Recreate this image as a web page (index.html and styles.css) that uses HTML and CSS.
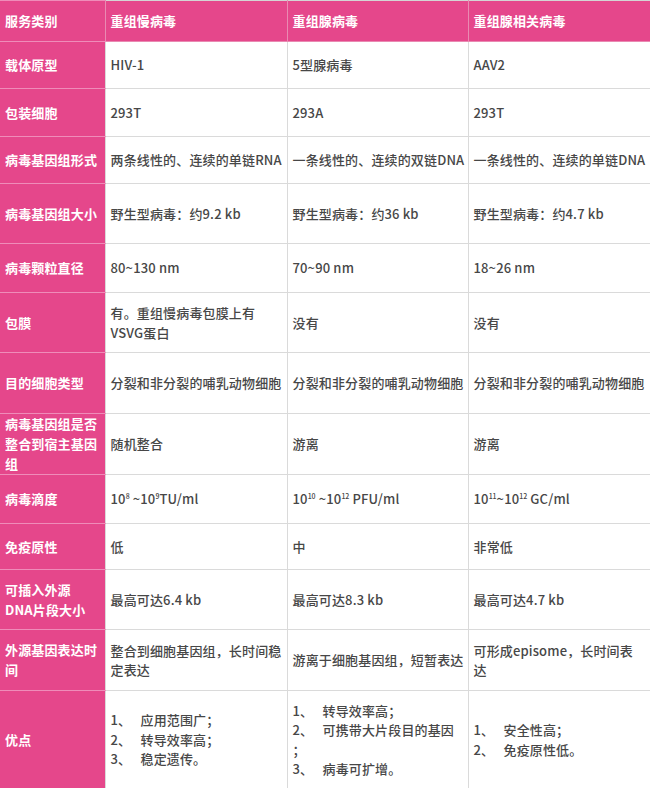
FILE: index.html
```html
<!DOCTYPE html>
<html lang="zh-CN">
<head>
<meta charset="utf-8">
<title>病毒载体比较</title>
<link rel="stylesheet" href="styles.css">
</head>
<body>
<table class="cmp">
  <colgroup>
    <col class="c0"><col class="c1"><col class="c2"><col class="c3">
  </colgroup>
  <thead>
    <tr class="h41">
      <th class="lab">服务类别</th>
      <th>重组慢病毒</th>
      <th>重组腺病毒</th>
      <th>重组腺相关病毒</th>
    </tr>
  </thead>
  <tbody>
    <tr class="h47">
      <th class="lab">载体原型</th>
      <td>HIV-1</td><td>5型腺病毒</td><td>AAV2</td>
    </tr>
    <tr class="h48">
      <th class="lab">包装细胞</th>
      <td>293T</td><td>293A</td><td>293T</td>
    </tr>
    <tr class="h47">
      <th class="lab">病毒基因组形式</th>
      <td>两条线性的、连续的单链RNA</td><td>一条线性的、连续的双链DNA</td><td>一条线性的、连续的单链DNA</td>
    </tr>
    <tr class="h60">
      <th class="lab">病毒基因组大小</th>
      <td>野生型病毒：约9.2 kb</td><td>野生型病毒：约36 kb</td><td>野生型病毒：约4.7 kb</td>
    </tr>
    <tr class="h49">
      <th class="lab">病毒颗粒直径</th>
      <td>80~130 nm</td><td>70~90 nm</td><td>18~26 nm</td>
    </tr>
    <tr class="h60">
      <th class="lab">包膜</th>
      <td>有。重组慢病毒包膜上有<br>VSVG蛋白</td><td>没有</td><td>没有</td>
    </tr>
    <tr class="h61">
      <th class="lab">目的细胞类型</th>
      <td>分裂和非分裂的哺乳动物细胞</td><td>分裂和非分裂的哺乳动物细胞</td><td>分裂和非分裂的哺乳动物细胞</td>
    </tr>
    <tr class="h60">
      <th class="lab">病毒基因组是否<br>整合到宿主基因<br>组</th>
      <td>随机整合</td><td>游离</td><td>游离</td>
    </tr>
    <tr class="h49">
      <th class="lab">病毒滴度</th>
      <td>10<sup>8</sup> ~10<sup>9</sup>TU/ml</td><td>10<sup>10</sup> ~10<sup>12</sup> PFU/ml</td><td>10<sup>11</sup>~10<sup>12</sup> GC/ml</td>
    </tr>
    <tr class="h46">
      <th class="lab">免疫原性</th>
      <td>低</td><td>中</td><td>非常低</td>
    </tr>
    <tr class="h60">
      <th class="lab">可插入外源<br>DNA片段大小</th>
      <td>最高可达6.4 kb</td><td>最高可达8.3 kb</td><td>最高可达4.7 kb</td>
    </tr>
    <tr class="h61">
      <th class="lab">外源基因表达时<br>间</th>
      <td>整合到细胞基因组，长时间稳<br>定表达</td><td>游离于细胞基因组，短暂表达</td><td>可形成episome，长时间表<br>达</td>
    </tr>
    <tr class="h98">
      <th class="lab">优点</th>
      <td>
        <div class="item"><span class="num">1、</span>应用范围广；</div>
        <div class="item"><span class="num">2、</span>转导效率高；</div>
        <div class="item"><span class="num">3、</span>稳定遗传。</div>
      </td>
      <td>
        <div class="item"><span class="num">1、</span>转导效率高；</div>
        <div class="item"><span class="num">2、</span>可携带大片段目的基因<br>；</div>
        <div class="item"><span class="num">3、</span>病毒可扩增。</div>
      </td>
      <td>
        <div class="item"><span class="num">1、</span>安全性高；</div>
        <div class="item"><span class="num">2、</span>免疫原性低。</div>
      </td>
    </tr>
  </tbody>
</table>
</body>
</html>
```
FILE: styles.css
```css
html, body {
  margin: 0;
  padding: 0;
  background: #ffffff;
}

body {
  font-family: "Noto Sans CJK SC", "Noto Sans", sans-serif;
  font-size: 13px;
  color: #474747;
}

.cmp {
  width: 650px;
  border-collapse: collapse;
  table-layout: fixed;
  border-top: 1px solid #d4d4d4;
}

.c0 { width: 105px; }
.c1 { width: 182px; }
.c2 { width: 181px; }
.c3 { width: 182px; }

.cmp th,
.cmp td {
  border: 1px solid #dadada;
  padding: 0 3px 0 5px;
  vertical-align: middle;
  text-align: left;
  line-height: 19.5px;
  letter-spacing: 0.15px;
  font-weight: 500;
  overflow: hidden;
}

.cmp td {
  color: #474747;
}

.cmp thead th {
  background: #e5478b;
  color: #ffffff;
  font-weight: 700;
  border-color: #e98ab2;
  border-top-color: #d4d4d4;
}

.cmp th.lab {
  background: #e5478b;
  color: #ffffff;
  font-weight: 700;
  border-left: none;
  border-color: #ef8cb9;
  border-right-color: #dadada;
  line-height: 20px;
}

.cmp thead th.lab {
  border-right-color: #e98ab2;
}

.cmp td:last-child,
.cmp th:last-child {
  border-right: none;
}

.h41 { height: 41px; }
.h46 { height: 46px; }
.h47 { height: 47px; }
.h48 { height: 48px; }
.h49 { height: 49px; }
.h60 { height: 60px; }
.h61 { height: 61px; }
.h98 { height: 98px; }

sup {
  font-size: 7px;
  line-height: 0;
  vertical-align: 5px;
  letter-spacing: 0;
}

.item {
  line-height: 19.5px;
}

.num {
  display: inline-block;
  width: 30px;
}
```
